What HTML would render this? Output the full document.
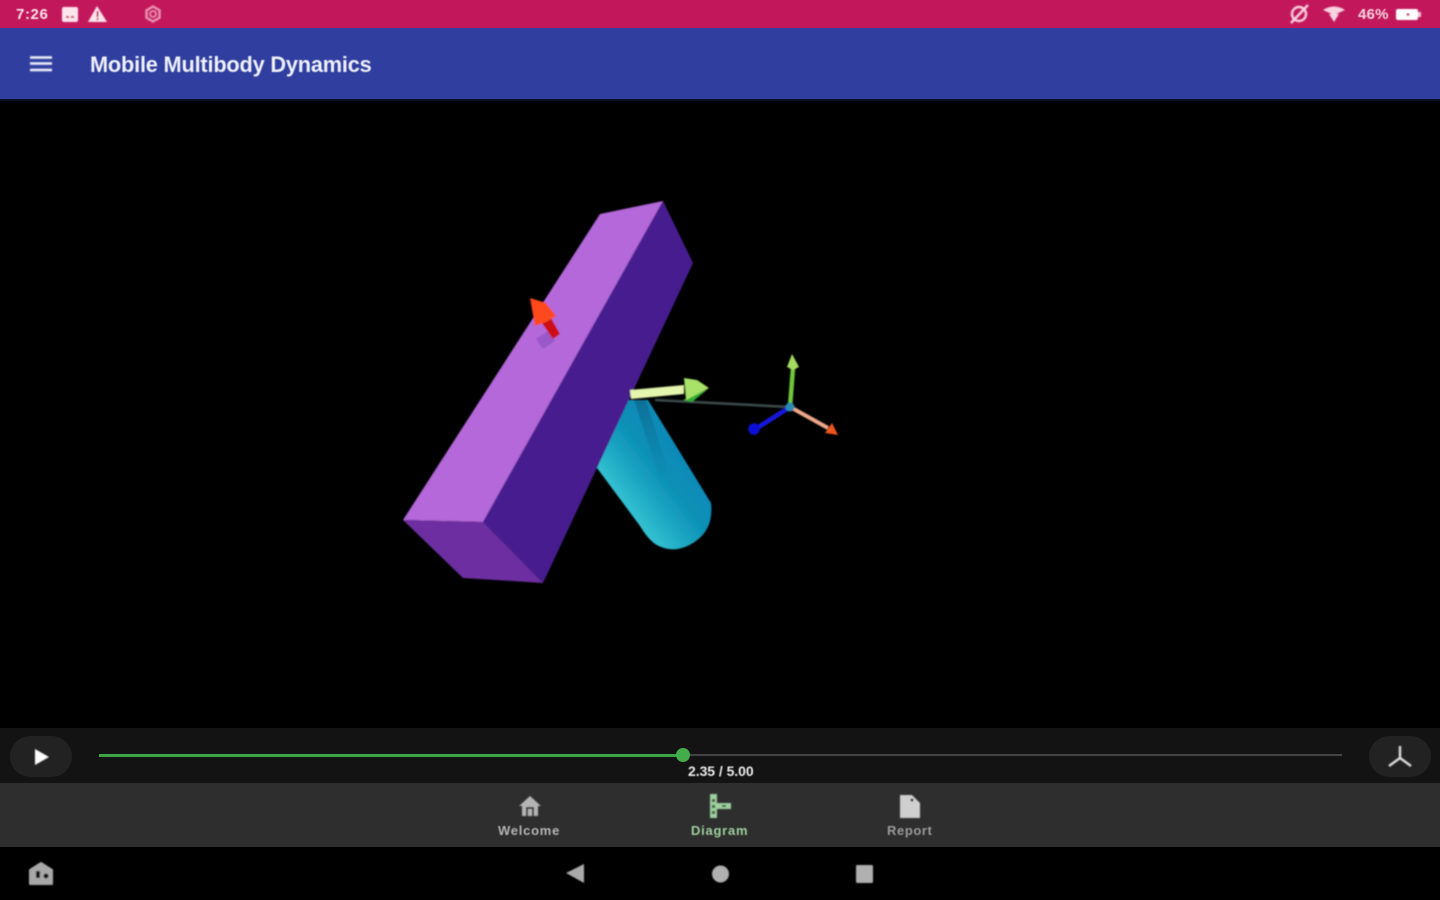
<!DOCTYPE html>
<html><head><meta charset="utf-8"><style>
html,body{margin:0;padding:0;background:#000;width:1440px;height:900px;overflow:hidden}
body{font-family:"Liberation Sans",sans-serif;position:relative}
.abs{position:absolute}
.t{position:absolute;white-space:nowrap;filter:blur(.6px)}
</style></head><body>
<div class="abs" style="left:0;top:0;width:1440px;height:28px;background:#c2185b"></div>
<div class="abs" style="left:0;top:28px;width:1440px;height:71px;background:#303f9f"></div>
<div class="abs" style="left:0;top:99px;width:1440px;height:2px;background:#0c0f28"></div>
<div class="t" style="left:16px;top:6px;font-size:15px;font-weight:bold;color:#fbe4ec;letter-spacing:.6px">7:26</div>
<div class="t" style="left:90px;top:52px;font-size:22px;font-weight:bold;color:#eef0fa;letter-spacing:-.2px;transform-origin:0 0;transform:scaleX(.989)">Mobile Multibody Dynamics</div>
<div class="t" style="left:1358px;top:6px;font-size:15px;font-weight:bold;color:#f7d3e0;letter-spacing:.2px">46%</div>
<div class="abs" style="left:0;top:728px;width:1440px;height:55px;background:#131313"></div>
<div class="abs" style="left:0;top:783px;width:1440px;height:64px;background:#2e2e2e"></div>
<div class="abs" style="left:10px;top:736px;width:62px;height:41px;border-radius:21px;background:#222"></div>
<div class="abs" style="left:1369px;top:736px;width:62px;height:41px;border-radius:21px;background:#222"></div>
<div class="abs" style="left:99px;top:754px;width:1243px;height:2px;background:#444"></div>
<div class="abs" style="left:99px;top:754px;width:584px;height:3px;background:#3da545"></div>
<div class="abs" style="left:676px;top:748px;width:14px;height:14px;border-radius:50%;background:#43ad4b"></div>
<div class="t" style="left:688px;top:763px;font-size:14px;font-weight:bold;color:#ececec;letter-spacing:-.05px">2.35 / 5.00</div>
<div class="t" style="left:498px;top:823px;font-size:13px;font-weight:bold;color:#b5b5b5;letter-spacing:.75px">Welcome</div>
<div class="t" style="left:691px;top:823px;font-size:13px;font-weight:bold;color:#9dcf9f;letter-spacing:.75px">Diagram</div>
<div class="t" style="left:887px;top:823px;font-size:13px;font-weight:bold;color:#9a9a9a;letter-spacing:.6px">Report</div>
<svg class="abs" style="left:0;top:0" width="1440" height="900" viewBox="0 0 1440 900">
<defs>
<linearGradient id="cy" gradientUnits="userSpaceOnUse" x1="618" y1="500" x2="680" y2="452">
<stop offset="0" stop-color="#35c3d3"/><stop offset=".35" stop-color="#1ca6c2"/><stop offset=".65" stop-color="#0c90b6"/><stop offset="1" stop-color="#0a8ab8"/>
</linearGradient>
<linearGradient id="st" gradientUnits="userSpaceOnUse" x1="640" y1="400" x2="662" y2="485">
<stop offset="0" stop-color="#0a6d92" stop-opacity=".9"/><stop offset="1" stop-color="#0a7da4" stop-opacity="0"/>
</linearGradient>
<filter id="b" x="-10%" y="-10%" width="120%" height="120%"><feGaussianBlur stdDeviation=".8"/></filter>
</defs>
<g filter="url(#b)">
<rect x="62" y="7" width="16" height="15" rx="2" fill="#fbe4ec"/><rect x="66" y="16" width="3" height="2" fill="#c2185b"/><rect x="71" y="16" width="3" height="2" fill="#c2185b"/>
<path d="M97 6 L107 22 H88 Z" fill="#fbe4ec"/><rect x="96.500" y="11" width="2" height="6" fill="#c2185b"/><rect x="96.500" y="18" width="2" height="2" fill="#c2185b"/>
<path d="M153 6.500 L159.500 10.300 V17.700 L153 21.500 L146.500 17.700 V10.300 Z" fill="none" stroke="#eb94b4" stroke-width="2.400"/><circle cx="153" cy="14" r="3" fill="none" stroke="#eb94b4" stroke-width="1.800"/>
<circle cx="1299" cy="14" r="7" fill="none" stroke="#f7d3e0" stroke-width="2.400"/><path d="M1291 23 L1308 5" stroke="#f7d3e0" stroke-width="2.400"/>
<path d="M1323 10 Q1334 3 1345 10 L1334 15 Z" fill="#f7d3e0"/><path d="M1329 14 H1339 L1334 22 Z" fill="#f7d3e0"/>
<rect x="1396" y="9" width="22" height="11" rx="2" fill="#fff"/><rect x="1418" y="12" width="3" height="5" fill="#f3c1d4"/><circle cx="1408" cy="14.500" r="1.500" fill="#c2185b"/>
<path d="M30 57.500 H52 M30 63.500 H52 M30 70 H52" stroke="#f2f3fb" stroke-width="2.400"/>
</g>
<g filter="url(#b)">
<path d="M626 400 L648 400 L711 503 Q714 528 696 541 Q675 556 655 544 Q647 538 640 526 L597 468 Z" fill="url(#cy)"/>
<path d="M634 400 L646 400 L668 470 L662 485 Z" fill="url(#st)"/>
<path d="M403 520 L483 522 L663 201 L600 214 Z" fill="#b468da"/>
<path d="M483 522 L663 201 L693 263 L543 583 Z" fill="#471f8f"/>
<path d="M403 520 L483 522 L543 583 L463 578 Z" fill="#6c2ea0"/>
<path d="M536 339 L548 331 L555 341 L543 349 Z" fill="#9a58c8"/>
<path d="M541 322 L550 316 L560 334 L553 339 Z" fill="#cc0a12"/>
<path d="M530 298 L546 303 L556 316 L546 322 L535 326 Z" fill="#ff4a1c"/>
<path d="M655 400 L790 407" stroke="#3c4c4c" stroke-width="2.600"/>
<path d="M683 400 L708 389 L692 402 Z" fill="#2fae2f"/>
<path d="M684 378 L697 380 L709 388 L686 400 Z" fill="#a8e268"/>
<path d="M630 390 L684 385 L684 394 L631 399 Z" fill="#e4f5ad"/>
<path d="M790 407 L793 368" stroke="#6fc83a" stroke-width="4.500"/>
<path d="M787 367 L792 354 L799 367 L793 370 Z" fill="#a6dc62"/>
<path d="M790 407 L757 428" stroke="#1414e0" stroke-width="4.500"/>
<circle cx="754" cy="429" r="5.800" fill="#1010d8"/>
<path d="M792 408 L828 428" stroke="#f0a888" stroke-width="4"/>
<path d="M825 433 L838 435 L832 423 Z" fill="#f0541e"/>
<circle cx="790" cy="407" r="4.500" fill="#2a8cb4"/>
<path d="M35 749 L49 757 L35 765 Z" fill="#fff"/>
<path d="M1400 746 V758 M1400 758 L1389 766 M1400 758 L1411 766" stroke="#dedede" stroke-width="2.400" fill="none"/>
<path d="M530 796 L541 806 L538 806 V816 H522 V806 H519 Z" fill="#b5b5b5"/><path d="M526 816 V807 H534 V816 H532 V809 H528 V816 Z" fill="#2e2e2e"/>
<path d="M710 794 H717 V818 H710 Z M717 803 H731 V809 H717 Z" fill="#9dcf9f"/>
<path d="M712 799 h3 v3 h-3Z M712 805 h3 v3 h-3Z M712 811 h3 v3 h-3Z M722 805 h4 v2 h-4Z" fill="#3b5a3d"/>
<path d="M900 795 H912 L920 803 V818 H900 Z" fill="#cfcfcf"/><circle cx="912" cy="800" r="1.500" fill="#222"/>
<path d="M566 873 L584 864 V883 Z" fill="#aaa"/>
<circle cx="720.500" cy="874" r="8.500" fill="#b0b0b0"/>
<rect x="856" y="865" width="17" height="18" rx="1.500" fill="#b0b0b0"/>
<path d="M41 863 L52 870 V884 H30 V870 Z" fill="#a8a8a8" stroke="#a8a8a8" stroke-width="2" stroke-linejoin="round"/>
<path d="M36 871 h4 v7 h-4 Z" fill="#111"/><circle cx="46" cy="876" r="2.500" fill="#111"/>
</g>
</svg>
</body></html>
